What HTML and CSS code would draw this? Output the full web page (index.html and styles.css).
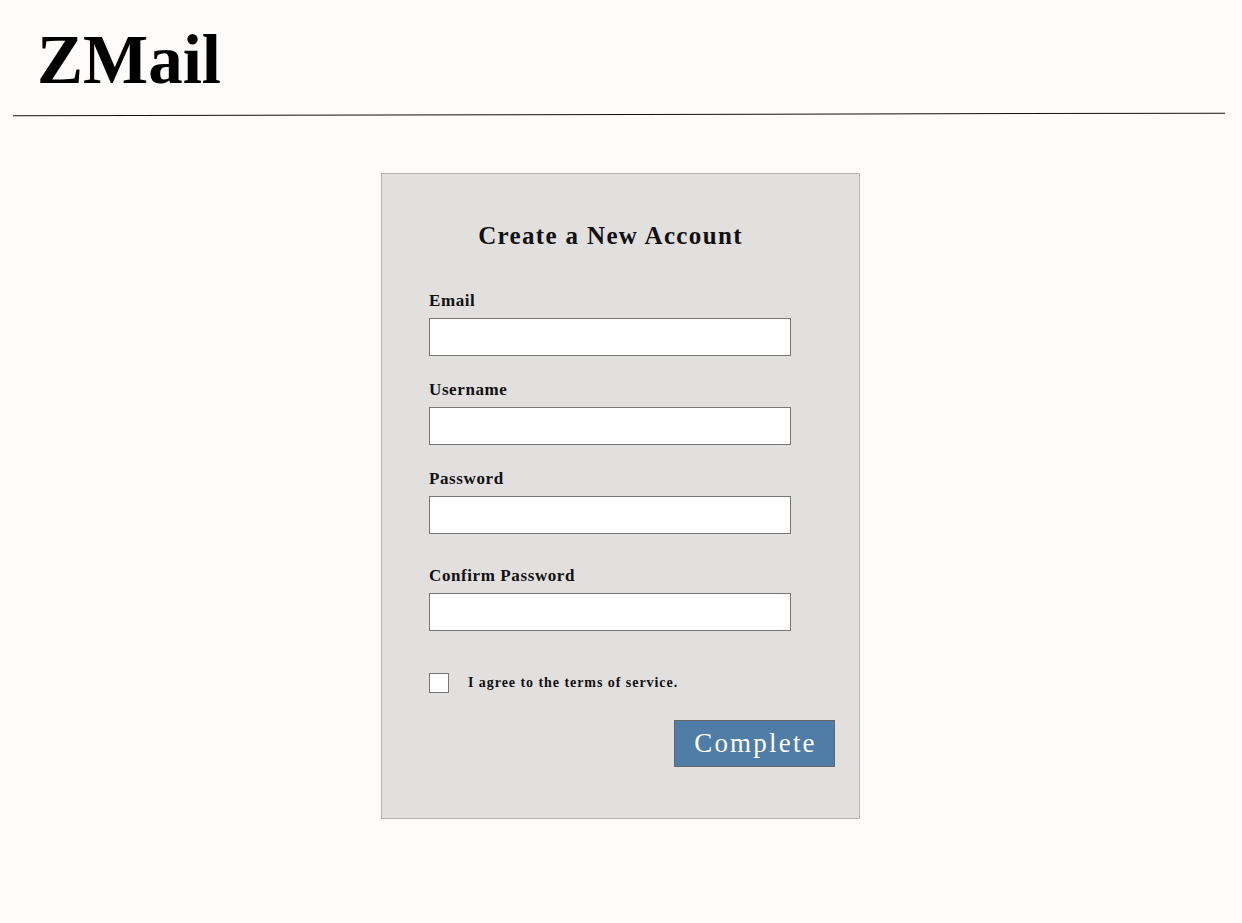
FILE: index.html
```html
<!DOCTYPE html>
<html>
<head>
<meta charset="utf-8">
<title>ZMail</title>
<link rel="stylesheet" href="styles.css">
</head>
<body>
<header class="site-header">
  <h1 class="logo">ZMail</h1>
  <div class="rule"></div>
</header>
<main class="main">
  <form class="card">
    <h2 class="card-title">Create a New Account</h2>
    <div class="field field-first">
      <label class="field-label">Email</label>
      <input class="field-input" type="text">
    </div>
    <div class="field">
      <label class="field-label">Username</label>
      <input class="field-input" type="text">
    </div>
    <div class="field">
      <label class="field-label">Password</label>
      <input class="field-input" type="password">
    </div>
    <div class="field field-confirm">
      <label class="field-label">Confirm Password</label>
      <input class="field-input" type="password">
    </div>
    <div class="agree">
      <span class="checkbox"></span>
      <span class="agree-text">I agree to the terms of service.</span>
    </div>
    <div class="actions">
      <button class="btn" type="button">Complete</button>
    </div>
  </form>
</main>
</body>
</html>
```
FILE: styles.css
```css
html, body {
  margin: 0;
  padding: 0;
  background: #fdfcfa;
  font-family: "Liberation Serif", "Times New Roman", serif;
  color: #111;
}
.site-header {
  padding: 0 17px 0 13px;
}
.logo {
  margin: 0;
  padding: 20px 0 0 24px;
  font-size: 69px;
  line-height: 80px;
  font-weight: bold;
  letter-spacing: 0;
  color: #000;
}
.rule {
  margin-top: 14px;
  height: 1px;
  background: #111;
  transform: rotate(-0.13deg);
}
.main {
  display: flex;
  justify-content: center;
  padding-top: 58px;
  padding-right: 1px;
}
.card {
  width: 477px;
  height: 644px;
  box-sizing: content-box;
  background: #e2dfdf;
  border: 1px solid #b9b6b6;
  padding: 0;
  display: flex;
  flex-direction: column;
}
.card-title {
  margin: 47px 0 0 0;
  padding-right: 20px;
  text-align: center;
  font-size: 25px;
  line-height: 30px;
  font-weight: bold;
  letter-spacing: 1.35px;
}
.field {
  margin: 0 0 0 47px;
  display: flex;
  flex-direction: column;
}
.field-label {
  display: block;
  font-size: 17px;
  line-height: 20px;
  font-weight: bold;
  letter-spacing: 0.6px;
  margin-top: 24px;
  margin-bottom: 7px;
}
.field-first {
  margin-top: 40px;
}
.field-first .field-label {
  margin-top: 0;
}
.field-confirm .field-label {
  margin-top: 32px;
}
.field-input {
  width: 362px;
  height: 38px;
  box-sizing: border-box;
  margin: 0;
  border: 1px solid #777;
  background: #fff;
  padding: 0 6px;
  font: inherit;
}
.agree {
  margin: 42px 0 0 47px;
  display: flex;
  align-items: center;
  gap: 19px;
}
.checkbox {
  width: 20px;
  height: 20px;
  box-sizing: border-box;
  border: 1px solid #777;
  background: #fff;
  flex: none;
}
.agree-text {
  font-size: 14px;
  font-weight: bold;
  letter-spacing: 0.95px;
}
.actions {
  display: flex;
  justify-content: flex-end;
  margin: 27px 24px 0 0;
}
.btn {
  width: 161px;
  height: 47px;
  box-sizing: border-box;
  background: #507ca8;
  border: 1px solid #666;
  color: #fff;
  font-family: "Liberation Serif", "Times New Roman", serif;
  font-size: 27px;
  letter-spacing: 2.2px;
  padding: 0 0 0 2px;
}
```
